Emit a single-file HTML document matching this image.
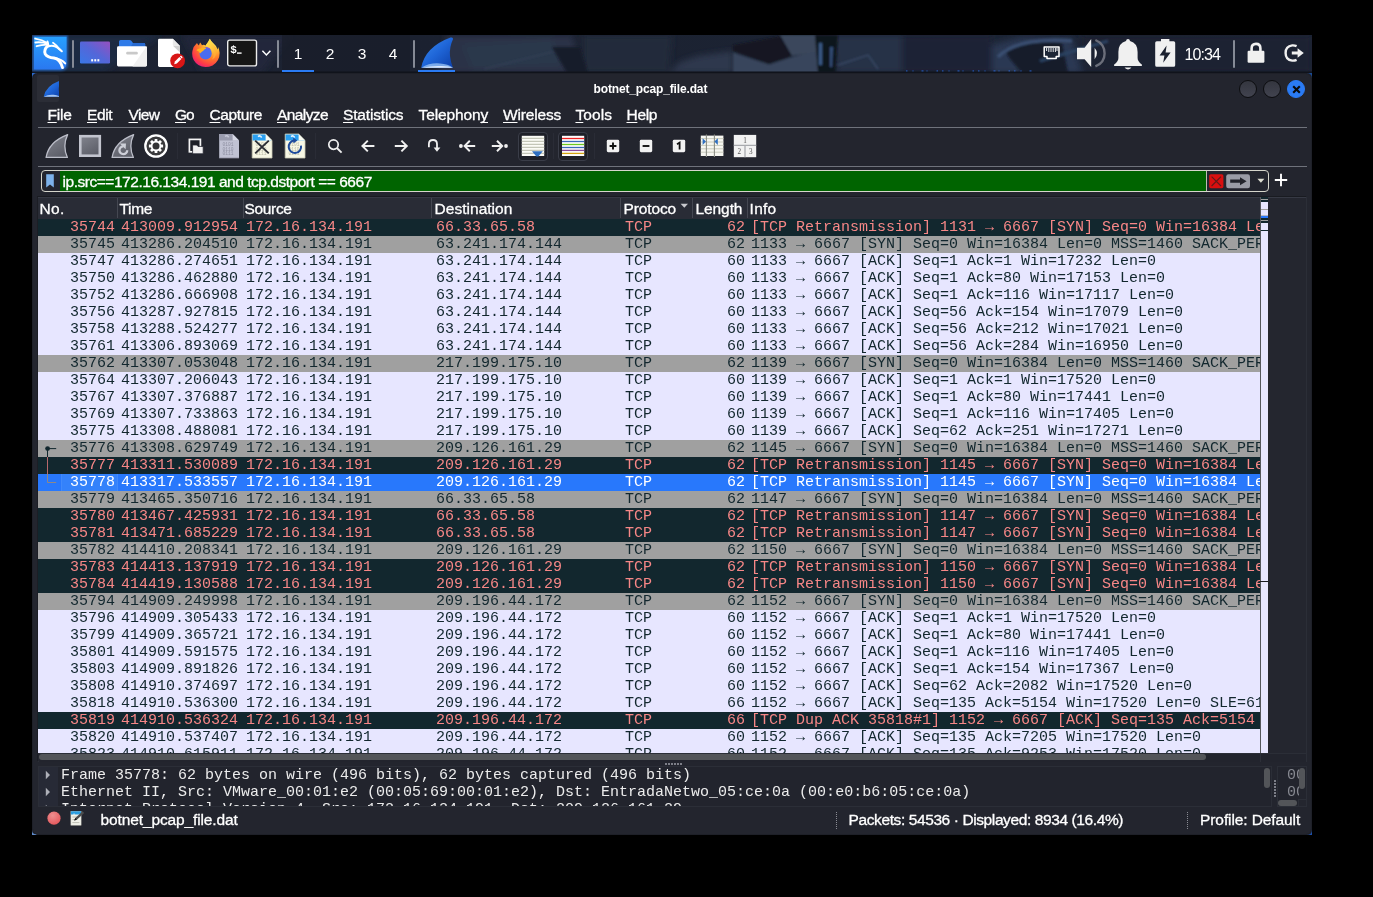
<!DOCTYPE html>
<html lang="en">
<head>
<meta charset="utf-8">
<title>botnet_pcap_file.dat</title>
<style>
html,body{margin:0;padding:0;background:#000;}
body{width:1373px;height:897px;position:relative;overflow:hidden;font-family:"Liberation Sans",sans-serif;color:#fff;}
#screen{position:absolute;left:32px;top:35px;width:1280px;height:800px;background:#23252e;overflow:hidden;}
#w{position:absolute;left:-32px;top:-35px;width:1373px;height:897px;will-change:transform;}
#w div,#w span,#w svg,#w i,#w b{position:absolute;}
.t{white-space:nowrap;line-height:1;}
/* panel */
#panel{left:32px;top:35px;width:1280px;height:38px;background:#1b2130;overflow:hidden;}
.psep{width:2px;top:5px;height:28px;background:#858a96;border-radius:1px;}
/* window */
#winb{left:32px;top:73px;width:1280px;height:762px;background:#1e2028;border-radius:6px 6px 5px 5px;}
#win{left:33px;top:74px;width:1278px;height:760px;background:#23252e;border-radius:5px;}
#title{left:594px;top:83px;font-size:12px;font-weight:bold;color:#fff;}
.wb{width:16px;height:16px;border-radius:50%;border:1px solid #0c0d10;background:linear-gradient(#34363f,#41434f);top:80px;box-sizing:content-box;}
#menu .t{top:106.5px;font-size:15.5px;color:#fff;-webkit-text-stroke:0.3px #fff;}
#menu u{text-decoration:underline;text-underline-offset:2px;text-decoration-thickness:1.1px;text-decoration-skip-ink:none;}
.hl{height:1px;background:#6f727b;left:38px;width:1269px;}
.tsep{width:1px;background:#2a2c36;top:133px;height:26px;}
/* filter */
#fbox{left:41px;top:170px;width:1228px;height:22px;box-sizing:border-box;border:1px solid #d6d6cc;border-radius:4px;background:#23252e;overflow:hidden;}
#fgreen{left:60px;top:171px;width:1146px;height:20px;background:#006400;}
#ftext{left:63px;top:173.5px;font-size:15.5px;color:#fff;-webkit-text-stroke:0.3px #fff;}
/* list */
#frame{left:37px;top:196px;width:1270px;height:566px;background:#24262f;box-sizing:border-box;border:1px solid #2b2e37;border-top-color:#191b21;border-left-color:#1c1e25;}
#hdr{left:38px;top:198px;width:1222px;height:21px;background:#292c36;font-size:15.5px;color:#fff;-webkit-text-stroke:0.3px #fff;}
#hdr .t{top:2.5px;}
#hdr i{top:0px;width:1px;height:20px;background:#454852;}
#list{left:38px;top:219px;width:1222px;height:534px;overflow:hidden;background:#e7e6ff;}
#list .r{position:relative;height:17px;width:1222px;white-space:nowrap;overflow:hidden;font-family:"Liberation Mono",monospace;font-size:15px;line-height:17px;}
#list .r .c{top:0px;height:17px;white-space:pre;}
.no{left:0;width:77px;text-align:right;}
.tm{left:83px;}
.sr{left:208px;}
.ds{left:398px;}
.pr{left:587px;}
.ln{left:654px;width:53px;text-align:right;}
.in{left:713px;}
.bad{background:#12272e;color:#f78787;}
.syn{background:#a0a0a0;color:#12272e;}
.tcp{background:#e7e6ff;color:#12272e;}
.sel{background:#2878fc;color:#fff;}
.cur{left:23px;width:55px;background:#3482fb;border-left:1px solid #418afb;border-right:1px solid #418afb;}
/* details */
.mono{font-family:"Liberation Mono",monospace;font-size:15px;line-height:17px;white-space:pre;}
.sb{background:#535559;border-radius:3px;}
#status .t{top:811.5px;font-size:15.5px;color:#fff;-webkit-text-stroke:0.3px #fff;}
#m1{left:47.50px !important;letter-spacing:-0.240px;}
#m2{left:87.02px !important;letter-spacing:-0.360px;}
#m3{left:128.50px !important;letter-spacing:-0.660px;}
#m4{left:175.04px !important;letter-spacing:-1.080px;}
#m5{left:209.50px !important;letter-spacing:-0.360px;}
#m6{left:277.00px !important;letter-spacing:-0.600px;}
#m7{left:343.02px !important;letter-spacing:-0.160px;}
#m8{left:418.54px !important;letter-spacing:-0.135px;}
#m9{left:503.00px !important;letter-spacing:-0.154px;}
#m10{left:575.46px !important;letter-spacing:0.090px;}
#m11{left:626.48px !important;letter-spacing:-0.300px;}
#title{left:593.58px !important;letter-spacing:-0.152px;}
#ftext{left:62.60px !important;letter-spacing:-0.472px;}
#h1{left:1.58px !important;letter-spacing:0.270px;}
#h2{left:81.52px !important;letter-spacing:-0.300px;}
#h3{left:206.62px !important;letter-spacing:-0.360px;}
#h4{left:396.60px !important;letter-spacing:0.018px;}
#h5{left:585.58px !important;letter-spacing:-0.150px;}
#h6{left:657.58px !important;letter-spacing:-0.108px;}
#h7{left:711.60px !important;letter-spacing:0.240px;}
#s1{left:100.62px !important;letter-spacing:-0.133px;}
#s2{left:848.56px !important;letter-spacing:-0.397px;}
#s3{left:1200.06px !important;letter-spacing:-0.096px;}
#clock{left:1184.58px !important;letter-spacing:-0.900px;}

</style>
</head>
<body>
<div id="screen"><div id="w">
<div id="panel">
<svg style="left:0;top:0" width="1280" height="38" viewBox="0 0 1280 38">
<defs>
<filter id="bl" x="-20%" y="-50%" width="140%" height="200%"><feGaussianBlur stdDeviation="3"/></filter>
<filter id="bl2" x="-20%" y="-50%" width="140%" height="200%"><feGaussianBlur stdDeviation="1.2"/></filter>
<linearGradient id="pbg" x1="0" x2="1" y1="0" y2="0"><stop offset="0" stop-color="#1d2434"/><stop offset="0.3" stop-color="#1b2130"/><stop offset="0.75" stop-color="#1c2434"/><stop offset="1" stop-color="#1a2236"/></linearGradient>
</defs>
<rect width="1280" height="38" fill="url(#pbg)"/>
<g filter="url(#bl)">
<polygon points="0,0 130,0 70,38 0,38" fill="#1f2a42"/>
<polygon points="150,0 260,0 230,38 170,38" fill="#20283a"/>
<polygon points="415,0 540,0 551,38 405,38" fill="#293346"/>
<polygon points="430,10 520,4 530,30 440,34" fill="#2c374b"/>
<polygon points="551,0 640,0 637,38 551,38" fill="#212a3b"/>
<polygon points="637,38 648,27 666,21 701,16 701,38" fill="#2e394d"/>
<polygon points="800,0 880,0 870,38 805,38" fill="#263047"/>
<polygon points="870,0 960,0 960,38 870,38" fill="#1a2234"/>
<polygon points="960,10 990,2 1040,3 1050,38 960,38" fill="#2b3952"/>
<polygon points="1050,0 1280,0 1280,38 1050,38" fill="#1b2132"/>
</g>
<g filter="url(#bl2)">
<polygon points="701,10 760,-1 760,21 737,29 701,16" fill="#141924"/>
<polygon points="701,17.4 737,29.6 760,22 790,14 790,38 701,38" fill="#38455c"/>
<polygon points="748,0 790,0 790,16 760,21" fill="#3a465c"/>
<polygon points="783,0 806,0 803,38 786,38" fill="#0f131c"/>
<polygon points="787,8 790,8 790,30 787,30" fill="#3b5a86"/>
<polygon points="798,12 801,12 800,32 798,32" fill="#34507a"/>
<polygon points="520,12 548,12 556,38 535,38" fill="#181d2a"/>
<path d="M452,34 L520,17" stroke="#36435a" stroke-width="1.2" fill="none"/>
<path d="M806,30 L836,20 L846,34" stroke="#3a4a66" stroke-width="1.4" fill="none"/>
<polygon points="972,14 1000,6 1030,8 1036,38 990,38 978,24" fill="#151b2a"/>
<path d="M966,22 Q985,2 1040,6" stroke="#3a4f72" stroke-width="3.5" fill="none"/>
<path d="M1008,26 L1076,6" stroke="#2b4262" stroke-width="3" fill="none"/>
</g>
<path d="M874,36.2 H1000" stroke="#2a6ae0" stroke-width="1.2" stroke-dasharray="1.5 5 1 8 2 3 1 9 1.5 4" fill="none"/>
<rect x="250" y="0" width="128" height="38" fill="#1a1e2a" opacity="0.75"/>
<rect x="0" y="36.5" width="1280" height="1.5" fill="#10131b"/>
</svg>
</div>
<!-- kali menu -->
<svg style="left:32px;top:35px" width="40" height="38" viewBox="0 0 40 38">
<defs><linearGradient id="kg" x1="0" y1="0" x2="0" y2="1"><stop offset="0" stop-color="#27a0ff"/><stop offset="1" stop-color="#2a78f0"/></linearGradient>
<filter id="kgl" x="-20%" y="-20%" width="140%" height="140%"><feGaussianBlur stdDeviation="1.1"/></filter></defs>
<path d="M0,0 H36 V29 Q36,36 28,36 H0 Z" fill="#2a80f5" opacity="0.55" filter="url(#kgl)"/>
<path d="M2,1.8 H34.6 V28 Q34.6,34.6 27,34.6 H2 Z" fill="url(#kg)"/>
<g fill="none" stroke="#fff" stroke-linecap="round" stroke-linejoin="round">
<path d="M3.2,3.6 Q10,4.5 15.8,8.2" stroke-width="1.9"/>
<path d="M3.4,7.5 Q10,6.8 15.8,8.8" stroke-width="1.9"/>
<path d="M4.6,11.2 Q10,9.4 16,9.6" stroke-width="1.9"/>
<path d="M15.5,6.5 Q16.5,9.5 16,11" stroke-width="2"/>
<path d="M16.2,10.4 Q11.5,14.5 13.2,19 Q15.5,22.6 22,23 Q28,24 30.5,32.6" stroke-width="2.9"/>
<path d="M23,23.2 Q30,24.5 33.2,28.4" stroke-width="1.9"/>
<path d="M15.8,11.4 Q21.5,9.6 25.6,12.6 Q28.5,15 29.8,16.2" stroke-width="2.1"/>
<path d="M21,7.8 Q24.5,10 27.4,14.2" stroke-width="1.8"/>
</g>
</svg>
<div class="psep" style="left:72px;top:40px"></div>
<!-- show desktop -->
<svg style="left:80px;top:41px" width="30" height="23" viewBox="0 0 30 23">
<defs><linearGradient id="sd" x1="0" y1="1" x2="1" y2="0"><stop offset="0" stop-color="#3878e8"/><stop offset="0.5" stop-color="#5566d8"/><stop offset="1" stop-color="#9650bf"/></linearGradient></defs>
<rect x="0" y="0.5" width="30" height="22" rx="1.2" fill="url(#sd)"/>
<rect x="11.2" y="18.2" width="1.9" height="2.2" fill="#fff"/><rect x="14.3" y="18.2" width="1.9" height="2.2" fill="#fff"/><rect x="17.4" y="18.2" width="1.9" height="2.2" fill="#fff"/>
</svg>
<!-- folder -->
<svg style="left:116px;top:39px" width="32" height="28" viewBox="0 0 32 28">
<path d="M3,2.6 Q3,1 4.6,1 H13.6 Q14.6,1 15.3,1.8 L17,4 H27.8 Q29.2,4 29.2,5.4 V9 H3 Z" fill="#2f7be8"/>
<path d="M17,4 H27.8 Q29.2,4 29.2,5.4 V9 H14 Z" fill="#2769cf"/>
<path d="M1,8.6 Q1,7.2 2.4,7.2 H29.6 Q31,7.2 31,8.6 V26 Q31,27.4 29.6,27.4 H2.4 Q1,27.4 1,26 Z" fill="#fff"/>
<path d="M31,8.6 V26 Q31,27.4 29.6,27.4 H16.5 L30.5,7.6 Q31,8 31,8.6 Z" fill="#f1f1f1"/>
<rect x="10.2" y="12.7" width="11.6" height="2.7" rx="1.2" fill="#c9c9c9"/>
</svg>
<!-- text editor -->
<svg style="left:157px;top:38px" width="30" height="32" viewBox="0 0 30 32">
<path d="M1,2.2 Q1,0.8 2.4,0.8 H15.8 L23,8 V27.6 Q23,29 21.6,29 H2.4 Q1,29 1,27.6 Z" fill="#fff"/>
<path d="M15.8,0.8 L23,8 H17 Q15.8,8 15.8,6.8 Z" fill="#e9e9e9"/>
<path d="M16.2,8 H23 V14.5 Z" fill="#d0d0d0"/>
<circle cx="20.6" cy="22.8" r="7.4" fill="#d81616"/>
<path d="M17.2,26.2 L17.9,23.6 L22.4,19.1 L24.3,21 L19.8,25.5 Z" fill="#fff"/>
<path d="M22.9,18.6 L23.5,18 Q24,17.6 24.5,18.1 L25.3,18.9 Q25.8,19.4 25.3,19.9 L24.8,20.5 Z" fill="#fff"/>
</svg>
<!-- firefox -->
<svg style="left:191px;top:38px" width="30" height="30" viewBox="0 0 30 30">
<defs>
<radialGradient id="ff1" cx="0.75" cy="0.15" r="1.0"><stop offset="0" stop-color="#fff36b"/><stop offset="0.3" stop-color="#ffbd35"/><stop offset="0.55" stop-color="#ff7a2a"/><stop offset="0.8" stop-color="#ff3b47"/><stop offset="1" stop-color="#e31587"/></radialGradient>
<linearGradient id="ff2" x1="0" y1="0" x2="1" y2="1"><stop offset="0" stop-color="#fff14f"/><stop offset="1" stop-color="#ff9a2e"/></linearGradient>
</defs>
<path d="M18.8,0.8 Q17.2,4.5 14.6,7.4 Q12.8,6.4 11,7.2 Q9.8,5.4 9.2,4.6 Q8.2,6 8,7.4 Q6.4,6.2 6,5 Q2.4,8 1.4,13 Q0,22 7.4,27 Q14,31 21.6,27.4 Q29,23 28.6,14.4 Q28.4,11 27,9 Q27,10.6 26.6,11.4 Q25.4,7.4 22.6,5.4 Q20,3.6 18.8,0.8 Z" fill="url(#ff1)"/>
<circle cx="14.6" cy="15.4" r="6.1" fill="#4a6cf0"/>
<path d="M14.6,9.3 Q18.5,9 20.6,12.4 Q18.6,10.6 16.4,11.2 Z" fill="#7a55e0"/>
<path d="M5.4,12.2 Q7,10.2 9.6,10.6 Q11.4,8.8 13.6,9.2 Q14.6,9.4 15.2,10.4 Q13.4,11 12.6,12.4 Q11,13.4 9,15.6 Q8.4,13 5.4,12.2 Z" fill="#ffb21f"/>
<path d="M18.8,0.8 Q21,5 24,8 Q27,12 25,17 Q24,20 21,21.6 Q24.6,16 21.2,11.4 Q18.8,8.6 14.6,7.4 Q17.2,4.5 18.8,0.8 Z" fill="url(#ff2)" opacity="0.9"/>
</svg>
<!-- terminal -->
<svg style="left:226px;top:38px" width="32" height="30" viewBox="0 0 32 30">
<rect x="1.7" y="2.1" width="28.8" height="25.8" rx="2" fill="#161616" stroke="#ededed" stroke-width="1.4"/>
<text x="4.3" y="15.2" font-family="Liberation Mono, monospace" font-weight="bold" font-size="11" fill="#fff">$</text>
<rect x="11" y="14.4" width="4.6" height="1.4" fill="#fff"/>
</svg>
<svg style="left:261px;top:49px" width="11" height="9" viewBox="0 0 11 9"><path d="M1.4,1.8 L5.4,6 L9.4,1.8" fill="none" stroke="#fff" stroke-width="1.5"/></svg>
<div class="psep" style="left:277px;top:40px"></div>
<!-- workspaces -->
<div style="left:282px;top:70px;width:32px;height:2px;background:#2a7bf4"></div>
<span class="t ws" style="left:282px;top:45.6px;width:32px;text-align:center;font-size:15.5px">1</span>
<span class="t ws" style="left:314px;top:45.6px;width:32px;text-align:center;font-size:15.5px">2</span>
<span class="t ws" style="left:346px;top:45.6px;width:32px;text-align:center;font-size:15.5px">3</span>
<span class="t ws" style="left:377px;top:45.6px;width:32px;text-align:center;font-size:15.5px">4</span>
<div class="psep" style="left:413px;top:40px"></div>
<!-- wireshark task -->
<svg style="left:418px;top:36px" width="38" height="36" viewBox="0 0 38 36">
<defs><linearGradient id="wf" x1="0" y1="0" x2="1" y2="1"><stop offset="0" stop-color="#3b8cf0"/><stop offset="0.5" stop-color="#1f66d8"/><stop offset="1" stop-color="#0d3fa8"/></linearGradient></defs>
<path d="M3.2,31.8 Q7,11 32.5,1.6 Q35.4,0.9 35,3.2 Q31.2,11 32,20 Q32.6,26 35,31.8 Z" fill="url(#wf)"/>
<path d="M3.2,31.8 Q12,26.5 22,27.5 Q30,28 35,31.8 Z" fill="#8db8ee" opacity="0.85"/>
<path d="M4,31.8 Q14,29.4 24,30 Q31,30.3 35,31.8 Z" fill="#dbe8fa"/>
<rect x="0" y="34" width="37" height="2" fill="#2a7bf4"/>
</svg>
<!-- tray -->
<svg style="left:1042px;top:45px" width="20" height="16" viewBox="0 0 20 16">
<path d="M2.2,2 H17 V11.4 H14.2 V13.6 H5 V11.4 H2.2 Z" fill="#1c2536" stroke="#fff" stroke-width="1.5" stroke-linejoin="round"/>
<path d="M4.6,3 V6 M6.8,3 V7 M9,3 V7 M11.2,3 V7 M13.4,3 V7 M15,3 V6" stroke="#fff" stroke-width="0.9"/>
</svg>
<svg style="left:1075px;top:37px" width="34" height="32" viewBox="0 0 34 32">
<path d="M2,10.7 H9.6 L16.2,2 V29.9 L9.6,22.2 H2 Z" fill="#f0f0f0"/>
<path d="M19.6,10.7 Q24.4,16.4 19.6,22.2 Z" fill="#f0f0f0"/>
<path d="M20.4,3 Q29.6,7 29.6,16.4 Q29.6,25.6 20.4,29.4" fill="none" stroke="#6b6e7a" stroke-width="2.4"/>
</svg>
<svg style="left:1112px;top:37px" width="32" height="34" viewBox="0 0 32 34">
<path d="M16,2 Q17.8,2 18,4 Q25.6,6 25.6,15 V21 Q25.6,24.4 29.8,27.6 Q30.4,28.4 29.6,29 H2.4 Q1.6,28.4 2.2,27.6 Q6.4,24.4 6.4,21 V15 Q6.4,6 14,4 Q14.2,2 16,2 Z" fill="#f0f0f0"/>
<path d="M12.6,30.6 H19.4 Q18.6,32.4 16,32.4 Q13.4,32.4 12.6,30.6 Z" fill="#f0f0f0"/>
</svg>
<svg style="left:1154px;top:38px" width="22" height="30" viewBox="0 0 22 30">
<path d="M7,1 H15.4 V3.2 H19.6 Q21.2,3.2 21.2,4.8 V27.2 Q21.2,28.8 19.6,28.8 H2.8 Q1.2,28.8 1.2,27.2 V4.8 Q1.2,3.2 2.8,3.2 H7 Z" fill="#f0f0f0"/>
<path d="M12.6,7.6 L5.6,17.4 H10.4 L9.2,24.8 L16.6,14.4 H11.6 Z" fill="#1b2130"/>
</svg>
<span class="t" id="clock" style="left:1185px;top:46.8px;font-size:16px">10:34</span>
<div class="psep" style="left:1233px;top:40px"></div>
<svg style="left:1246px;top:41px" width="20" height="23" viewBox="0 0 20 23">
<path d="M5.6,10.4 V7.4 Q5.6,2.9 10,2.9 Q14.4,2.9 14.4,7.4 V10.4" fill="none" stroke="#f0f0f0" stroke-width="2.6"/>
<rect x="1.6" y="9.8" width="16.8" height="12" rx="1.2" fill="#f0f0f0"/>
</svg>
<svg style="left:1283px;top:43px" width="22" height="20" viewBox="0 0 22 20">
<path d="M13.6,3.2 Q11.4,2.2 9.2,2.4 Q2.6,3.2 2.6,10 Q2.6,16.8 9.2,17.6 Q11.4,17.8 13.6,16.8" fill="none" stroke="#f0f0f0" stroke-width="2.4"/>
<path d="M8.8,8.6 H14.6 V5.2 L20.8,10 L14.6,14.8 V11.4 H8.8 Z" fill="#f0f0f0"/>
</svg>

<div id="winb"></div><div id="win"></div>
<div style="left:37px;top:75px;width:22px;height:27px;background:#2b2d36;border-radius:2px;overflow:hidden">
<svg style="left:5px;top:5px" width="20" height="19" viewBox="0 0 38 36">
<path d="M3.2,31.8 Q7,11 32.5,1.6 Q35.4,0.9 35,3.2 Q31.2,11 32,20 Q32.6,26 35,31.8 Z" fill="url(#wf)"/>
<path d="M3.2,31.8 Q12,27 22,28 Q30,28.5 35,31.8 Z" fill="#a8c8f2"/>
</svg></div>
<span class="t" id="title">botnet_pcap_file.dat</span>
<div class="wb" style="left:1239px"></div>
<div class="wb" style="left:1263px"></div>
<div class="wb" style="left:1287px;background:#2a7bf4;border-color:#2a7bf4"></div>
<svg style="left:1287.5px;top:80.5px" width="17" height="17" viewBox="0 0 17 17"><path d="M5.2,5.2 L11.8,11.8 M11.8,5.2 L5.2,11.8" stroke="#0a0a0a" stroke-width="2.1" stroke-linecap="butt"/></svg>

<div id="menu">
<span class="t" id="m1" style="left:47.5px"><u>F</u>ile</span>
<span class="t" id="m2" style="left:87.2px"><u>E</u>dit</span>
<span class="t" id="m3" style="left:128px"><u>V</u>iew</span>
<span class="t" id="m4" style="left:175.4px"><u>G</u>o</span>
<span class="t" id="m5" style="left:209.5px"><u>C</u>apture</span>
<span class="t" id="m6" style="left:277px"><u>A</u>nalyze</span>
<span class="t" id="m7" style="left:343.2px"><u>S</u>tatistics</span>
<span class="t" id="m8" style="left:418.9px">Telephon<u>y</u></span>
<span class="t" id="m9" style="left:503px"><u>W</u>ireless</span>
<span class="t" id="m10" style="left:575.1px"><u>T</u>ools</span>
<span class="t" id="m11" style="left:626.3px"><u>H</u>elp</span>
</div>
<div class="hl" style="top:127px"></div>
<div class="hl" style="top:166px"></div>

<svg style="left:0;top:0" width="0" height="0"><defs>
<linearGradient id="gf" x1="0" y1="0" x2="0.6" y2="1"><stop offset="0" stop-color="#82848e"/><stop offset="1" stop-color="#5d5f69"/></linearGradient>
</defs></svg>
<!-- start capture fin -->
<svg style="left:45px;top:133px" width="25" height="26" viewBox="0 0 25 26">
<path d="M1.1,24.4 Q3.6,8.8 22.6,1.6 Q17.2,13 22.4,24.4 Z" fill="url(#gf)" stroke="#bcbec9" stroke-width="1.3" stroke-linejoin="round"/>
</svg>
<!-- stop -->
<svg style="left:78px;top:134px" width="24" height="24" viewBox="0 0 24 24">
<rect x="2.3" y="2.2" width="19.5" height="19.5" fill="url(#gf)" stroke="#c2c4ce" stroke-width="2.6"/>
</svg>
<!-- restart fin -->
<svg style="left:111px;top:133px" width="25" height="26" viewBox="0 0 25 26">
<path d="M1.1,24.4 Q3.6,8.8 22.6,1.6 Q17.2,13 22.4,24.4 Z" fill="url(#gf)" stroke="#bcbec9" stroke-width="1.3" stroke-linejoin="round"/>
<path d="M12.4,13.4 A3.9,3.9 0 1 0 16.2,17.2" fill="none" stroke="#cdcfd8" stroke-width="2.3"/>
<path d="M8.8,10.6 L15,10.4 L14.6,16.2 Z" fill="#cdcfd8"/>
</svg>
<!-- options gear -->
<svg style="left:143px;top:133px" width="26" height="26" viewBox="0 0 26 26">
<circle cx="13" cy="13" r="10.7" fill="#3a3a3c" stroke="#fff" stroke-width="2.3"/>
<g fill="#fff"><circle cx="13" cy="13" r="5.3"/>
<rect x="11.6" y="5.9" width="2.8" height="14.2" rx="0.5"/>
<rect x="11.6" y="5.9" width="2.8" height="14.2" rx="0.5" transform="rotate(45 13 13)"/>
<rect x="11.6" y="5.9" width="2.8" height="14.2" rx="0.5" transform="rotate(90 13 13)"/>
<rect x="11.6" y="5.9" width="2.8" height="14.2" rx="0.5" transform="rotate(135 13 13)"/></g>
<circle cx="13" cy="13" r="3.5" fill="#333335"/>
</svg>
<div class="tsep" style="left:177px"></div>
<!-- open -->
<svg style="left:187px;top:137px" width="18" height="18" viewBox="0 0 18 18">
<rect x="2.4" y="2.4" width="11" height="12.4" fill="#1d1f27" stroke="#f4f4f4" stroke-width="1.7"/>
<path d="M5.6,8 H9.8 L11,9.4 H16.2 V16.8 H5.6 Z" fill="#f0f0f0" stroke="#23252e" stroke-width="0.8"/>
</svg>
<!-- save (disabled) -->
<svg style="left:218px;top:133px" width="22" height="26" viewBox="0 0 22 26">
<path d="M1.2,1 H14.6 L21,7.4 V25 H1.2 Z" fill="#c0c2d3"/>
<path d="M1.2,1 H14.6 L21,7.4 H1.2 Z" fill="#9a9cae"/>
<path d="M14.6,1 L21,7.4 H14.6 Z" fill="#d6d8e4"/>
<path d="M7,3.4 Q9.4,1.8 10.6,4.4" stroke="#c8cad8" stroke-width="1.6" fill="none"/>
<g font-family="Liberation Mono, monospace" font-size="4.6" fill="#8e90a2"><text x="4.4" y="13">0101</text><text x="4.4" y="17.6">0110</text><text x="4.4" y="22.2">0111</text></g>
<path d="M1.2,25 H21" stroke="#8a8c9c" stroke-width="0.8"/>
</svg>
<!-- close file -->
<svg style="left:251px;top:133px" width="22" height="26" viewBox="0 0 22 26">
<path d="M1.2,1 H14.6 L21,7.4 V25 H1.2 Z" fill="#f7f7e4" stroke="#c9c9b4" stroke-width="0.8"/>
<path d="M1.6,1.4 H14.4 L20.6,7.4 H1.6 Z" fill="#2a9ff0"/>
<path d="M14.6,1 L21,7.4 H14.6 Z" fill="#fbfbf0"/>
<path d="M7,3.6 Q9.4,1.8 10.6,4.6" stroke="#e8f4ff" stroke-width="1.6" fill="none"/>
<g font-family="Liberation Mono, monospace" font-size="4.6" fill="#b9b9a6"><text x="4.4" y="13">0101</text><text x="4.4" y="17.6">0110</text><text x="4.4" y="22.2">0111</text></g>
<path d="M4.2,7.6 L17.8,20.4 M17.8,7.6 L4.2,20.4" stroke="#2b2d33" stroke-width="1.9"/>
</svg>
<!-- reload -->
<svg style="left:284px;top:133px" width="22" height="26" viewBox="0 0 22 26">
<path d="M1.2,1 H14.6 L21,7.4 V25 H1.2 Z" fill="#f7f7e4" stroke="#c9c9b4" stroke-width="0.8"/>
<path d="M1.6,1.4 H14.4 L20.6,7.4 H1.6 Z" fill="#2a9ff0"/>
<path d="M14.6,1 L21,7.4 H14.6 Z" fill="#fbfbf0"/>
<path d="M7,3.6 Q9.4,1.8 10.6,4.6" stroke="#e8f4ff" stroke-width="1.6" fill="none"/>
<g font-family="Liberation Mono, monospace" font-size="4.6" fill="#b9b9a6"><text x="4.4" y="13">0101</text><text x="4.4" y="17.6">0110</text><text x="4.4" y="22.2">0111</text></g>
<path d="M10.2,7.6 A6.2,6.2 0 1 0 17,12.6" fill="none" stroke="#1d4a9c" stroke-width="2"/>
<path d="M9.2,4.6 L13.4,7.4 L9.4,10.4 Z" fill="#1d4a9c"/>
</svg>
<div class="tsep" style="left:315px"></div>
<!-- find -->
<svg style="left:326px;top:137px" width="18" height="18" viewBox="0 0 18 18">
<circle cx="7.5" cy="7.6" r="4.7" fill="none" stroke="#f0f0f0" stroke-width="1.7"/>
<path d="M10.9,11 L15.6,15.6" stroke="#f0f0f0" stroke-width="1.9"/>
</svg>
<!-- back -->
<svg style="left:360px;top:138px" width="16" height="16" viewBox="0 0 16 16"><path d="M14.4,8 H3 M7.8,2.6 L2.4,8 L7.8,13.4" fill="none" stroke="#f0f0f0" stroke-width="1.95"/></svg>
<!-- forward -->
<svg style="left:393px;top:138px" width="16" height="16" viewBox="0 0 16 16"><path d="M1.8,8 H13.2 M8.4,2.6 L13.8,8 L8.4,13.4" fill="none" stroke="#f0f0f0" stroke-width="1.95"/></svg>
<!-- goto -->
<svg style="left:426px;top:137px" width="16" height="18" viewBox="0 0 16 18">
<path d="M2.9,10.2 V7 Q2.9,3 7,3 Q11,3 11,7 V11" fill="none" stroke="#f0f0f0" stroke-width="1.8"/>
<path d="M7.6,10.4 H14.4 L11,14.8 Z" fill="#f0f0f0"/>
</svg>
<!-- first -->
<svg style="left:457px;top:138px" width="20" height="16" viewBox="0 0 20 16"><circle cx="3.9" cy="8" r="1.9" fill="#f0f0f0"/><path d="M18.2,8 H8.4 M12.8,2.8 L7.6,8 L12.8,13.2" fill="none" stroke="#f0f0f0" stroke-width="1.95"/></svg>
<!-- last -->
<svg style="left:490px;top:138px" width="20" height="16" viewBox="0 0 20 16"><circle cx="16" cy="8" r="1.9" fill="#f0f0f0"/><path d="M1.8,8 H11.4 M7,2.8 L12.2,8 L7,13.2" fill="none" stroke="#f0f0f0" stroke-width="1.95"/></svg>
<!-- autoscroll (checked) -->
<div style="left:518px;top:132px;width:30px;height:29px;box-sizing:border-box;border:1px solid #3a3d48;border-radius:4px;background:#1e2028"></div>
<svg style="left:521px;top:135px" width="24" height="22" viewBox="0 0 24 22">
<rect x="0.8" y="0.8" width="22.4" height="20.2" fill="#fbfbf6"/>
<g stroke="#c4c6b8" stroke-width="1.1"><path d="M0.8,3.4 H23.2 M0.8,6.4 H23.2 M0.8,9.4 H23.2 M0.8,12.4 H23.2 M0.8,15.4 H23.2 M0.8,18.4 H23.2"/></g>
<path d="M11,16.2 H21.8 L17.4,21.6 H15.4 Z" fill="#2f6fc0"/>
</svg>
<div class="tsep" style="left:553px"></div>
<!-- colorize (checked) -->
<div style="left:558px;top:132px;width:30px;height:29px;box-sizing:border-box;border:1px solid #3a3d48;border-radius:4px;background:#1e2028"></div>
<svg style="left:561px;top:135px" width="24" height="22" viewBox="0 0 24 22">
<rect x="1" y="0.8" width="22.2" height="20.2" fill="#fdfdfd"/>
<path d="M1,3.5 H23.2" stroke="#ee2222" stroke-width="1.3"/>
<path d="M1,6.5 H23.2" stroke="#3a68b8" stroke-width="1.3"/>
<path d="M1,9.5 H23.2" stroke="#6cc820" stroke-width="1.3"/>
<path d="M1,12.5 H23.2" stroke="#3a68b8" stroke-width="1.3"/>
<path d="M1,15.4 H23.2" stroke="#8a4a9c" stroke-width="1.3"/>
<path d="M1,18.4 H23.2" stroke="#d4a412" stroke-width="1.3"/>
</svg>
<div class="tsep" style="left:594px"></div>
<!-- zoom in/out/100 -->
<svg style="left:606px;top:139px" width="14" height="14" viewBox="0 0 14 14"><rect x="0.8" y="0.8" width="12.4" height="12.4" rx="1.4" fill="#f2f2f2"/><path d="M3.6,7 H10.4 M7,3.6 V10.4" stroke="#111" stroke-width="1.9"/></svg>
<svg style="left:639px;top:139px" width="14" height="14" viewBox="0 0 14 14"><rect x="0.8" y="0.8" width="12.4" height="12.4" rx="1.4" fill="#f2f2f2"/><path d="M3.6,7 H10.4" stroke="#111" stroke-width="1.9"/></svg>
<svg style="left:672px;top:139px" width="14" height="14" viewBox="0 0 14 14"><rect x="0.8" y="0.8" width="12.4" height="12.4" rx="1.4" fill="#f2f2f2"/><path d="M5,5.2 L7.6,3.6 V10.6" fill="none" stroke="#111" stroke-width="1.8"/></svg>
<!-- resize columns -->
<svg style="left:700px;top:134px" width="24" height="24" viewBox="0 0 24 24">
<rect x="0.8" y="1.6" width="22.6" height="20.4" fill="#f6f6f0"/>
<g stroke="#c8cabc" stroke-width="1"><path d="M0.8,4.6 H23.4 M0.8,8 H23.4 M0.8,11.4 H23.4 M0.8,14.8 H23.4 M0.8,18.2 H23.4"/></g>
<path d="M6.4,0.6 V23 M14.4,0.6 V23" stroke="#8c8e86" stroke-width="1.1"/>
<path d="M2.6,4.2 L6,7.6 L2.6,11 Z" fill="#2f6fc0"/>
<path d="M17.8,4.2 L14.4,7.6 L17.8,11 Z" fill="#2f6fc0"/>
</svg>
<!-- layout -->
<svg style="left:733px;top:134px" width="24" height="24" viewBox="0 0 24 24">
<rect x="0.8" y="0.9" width="22.4" height="22.3" fill="#f2f2f2"/>
<path d="M0.8,11.4 H23.2 M12,11.4 V23.2" stroke="#a8aaae" stroke-width="1.3"/>
<g font-family="Liberation Serif, serif" font-size="7.2" fill="#555"><text x="10.2" y="8.6">1</text><text x="4.6" y="20.4">2</text><text x="16" y="20.4">3</text></g>
</svg>

<div id="fbox"></div>
<div id="fgreen"></div>
<div style="left:1206px;top:171px;width:1px;height:20px;background:#bdbdb4"></div>
<svg style="left:45px;top:173px" width="10" height="16" viewBox="0 0 10 16"><path d="M1.2,1.2 H8.8 V14.6 L5,11.4 L1.2,14.6 Z" fill="#7db2ea"/></svg>
<span class="t" id="ftext">ip.src==172.16.134.191 and tcp.dstport == 6667</span>
<svg style="left:1209px;top:174px" width="15" height="15" viewBox="0 0 15 15"><rect x="0.2" y="0.2" width="14.2" height="14" rx="1.6" fill="#d90f0f"/><path d="M2.6,2.6 L12,12 M12,2.6 L2.6,12" stroke="#5e1a1a" stroke-width="1.1"/></svg>
<svg style="left:1226px;top:174px" width="25" height="15" viewBox="0 0 25 15"><rect x="0.2" y="0.2" width="23.8" height="14" rx="2.2" fill="#9a9ca6"/><path d="M4.2,5.6 H14 V3.2 L20.6,7.2 L14,11.2 V8.8 H4.2 Z" fill="#22242c"/></svg>
<svg style="left:1257px;top:178px" width="8" height="6" viewBox="0 0 8 6"><path d="M0.4,0.8 H7.4 L3.9,4.8 Z" fill="#deded2"/></svg>
<svg style="left:1274px;top:173px" width="14" height="14" viewBox="0 0 14 14"><path d="M0.8,7 H13.2 M7,0.8 V13.2" stroke="#fff" stroke-width="1.9"/></svg>

<div id="frame"></div>
<div style="left:38px;top:197px;width:1268px;height:1px;background:#363944"></div>
<div id="hdr">
<span class="t" id="h1" style="left:2.3px">No.</span><i style="left:79px"></i>
<span class="t" id="h2" style="left:81.7px">Time</span><i style="left:205px"></i>
<span class="t" id="h3" style="left:207.7px">Source</span><i style="left:393px"></i>
<span class="t" id="h4" style="left:397.5px">Destination</span><i style="left:582px"></i>
<span class="t" id="h5" style="left:586.3px">Protoco</span><i style="left:654px"></i>
<span class="t" id="h6" style="left:658.3px">Length</span><i style="left:709px"></i>
<span class="t" id="h7" style="left:712.5px">Info</span>
<svg style="left:642px;top:5px" width="9" height="6" viewBox="0 0 9 6"><path d="M0.6,0.8 H8 L4.3,4.8 Z" fill="#c8c9ce"/></svg>
</div>
<div id="list">
<div class="r bad"><span class="c no">35744</span><span class="c tm">413009.912954</span><span class="c sr">172.16.134.191</span><span class="c ds">66.33.65.58</span><span class="c pr">TCP</span><span class="c ln">62</span><span class="c in">[TCP Retransmission] 1131 → 6667 [SYN] Seq=0 Win=16384 Len=0 MSS=1460 SACK_PERM</span></div>
<div class="r syn"><span class="c no">35745</span><span class="c tm">413286.204510</span><span class="c sr">172.16.134.191</span><span class="c ds">63.241.174.144</span><span class="c pr">TCP</span><span class="c ln">62</span><span class="c in">1133 → 6667 [SYN] Seq=0 Win=16384 Len=0 MSS=1460 SACK_PERM</span></div>
<div class="r tcp"><span class="c no">35747</span><span class="c tm">413286.274651</span><span class="c sr">172.16.134.191</span><span class="c ds">63.241.174.144</span><span class="c pr">TCP</span><span class="c ln">60</span><span class="c in">1133 → 6667 [ACK] Seq=1 Ack=1 Win=17232 Len=0</span></div>
<div class="r tcp"><span class="c no">35750</span><span class="c tm">413286.462880</span><span class="c sr">172.16.134.191</span><span class="c ds">63.241.174.144</span><span class="c pr">TCP</span><span class="c ln">60</span><span class="c in">1133 → 6667 [ACK] Seq=1 Ack=80 Win=17153 Len=0</span></div>
<div class="r tcp"><span class="c no">35752</span><span class="c tm">413286.666908</span><span class="c sr">172.16.134.191</span><span class="c ds">63.241.174.144</span><span class="c pr">TCP</span><span class="c ln">60</span><span class="c in">1133 → 6667 [ACK] Seq=1 Ack=116 Win=17117 Len=0</span></div>
<div class="r tcp"><span class="c no">35756</span><span class="c tm">413287.927815</span><span class="c sr">172.16.134.191</span><span class="c ds">63.241.174.144</span><span class="c pr">TCP</span><span class="c ln">60</span><span class="c in">1133 → 6667 [ACK] Seq=56 Ack=154 Win=17079 Len=0</span></div>
<div class="r tcp"><span class="c no">35758</span><span class="c tm">413288.524277</span><span class="c sr">172.16.134.191</span><span class="c ds">63.241.174.144</span><span class="c pr">TCP</span><span class="c ln">60</span><span class="c in">1133 → 6667 [ACK] Seq=56 Ack=212 Win=17021 Len=0</span></div>
<div class="r tcp"><span class="c no">35761</span><span class="c tm">413306.893069</span><span class="c sr">172.16.134.191</span><span class="c ds">63.241.174.144</span><span class="c pr">TCP</span><span class="c ln">60</span><span class="c in">1133 → 6667 [ACK] Seq=56 Ack=284 Win=16950 Len=0</span></div>
<div class="r syn"><span class="c no">35762</span><span class="c tm">413307.053048</span><span class="c sr">172.16.134.191</span><span class="c ds">217.199.175.10</span><span class="c pr">TCP</span><span class="c ln">62</span><span class="c in">1139 → 6667 [SYN] Seq=0 Win=16384 Len=0 MSS=1460 SACK_PERM</span></div>
<div class="r tcp"><span class="c no">35764</span><span class="c tm">413307.206043</span><span class="c sr">172.16.134.191</span><span class="c ds">217.199.175.10</span><span class="c pr">TCP</span><span class="c ln">60</span><span class="c in">1139 → 6667 [ACK] Seq=1 Ack=1 Win=17520 Len=0</span></div>
<div class="r tcp"><span class="c no">35767</span><span class="c tm">413307.376887</span><span class="c sr">172.16.134.191</span><span class="c ds">217.199.175.10</span><span class="c pr">TCP</span><span class="c ln">60</span><span class="c in">1139 → 6667 [ACK] Seq=1 Ack=80 Win=17441 Len=0</span></div>
<div class="r tcp"><span class="c no">35769</span><span class="c tm">413307.733863</span><span class="c sr">172.16.134.191</span><span class="c ds">217.199.175.10</span><span class="c pr">TCP</span><span class="c ln">60</span><span class="c in">1139 → 6667 [ACK] Seq=1 Ack=116 Win=17405 Len=0</span></div>
<div class="r tcp"><span class="c no">35775</span><span class="c tm">413308.488081</span><span class="c sr">172.16.134.191</span><span class="c ds">217.199.175.10</span><span class="c pr">TCP</span><span class="c ln">60</span><span class="c in">1139 → 6667 [ACK] Seq=62 Ack=251 Win=17271 Len=0</span></div>
<div class="r syn"><span class="c no">35776</span><span class="c tm">413308.629749</span><span class="c sr">172.16.134.191</span><span class="c ds">209.126.161.29</span><span class="c pr">TCP</span><span class="c ln">62</span><span class="c in">1145 → 6667 [SYN] Seq=0 Win=16384 Len=0 MSS=1460 SACK_PERM</span></div>
<div class="r bad"><span class="c no">35777</span><span class="c tm">413311.530089</span><span class="c sr">172.16.134.191</span><span class="c ds">209.126.161.29</span><span class="c pr">TCP</span><span class="c ln">62</span><span class="c in">[TCP Retransmission] 1145 → 6667 [SYN] Seq=0 Win=16384 Len=0 MSS=1460 SACK_PERM</span></div>
<div class="r sel"><span class="c cur"></span><span class="c no">35778</span><span class="c tm">413317.533557</span><span class="c sr">172.16.134.191</span><span class="c ds">209.126.161.29</span><span class="c pr">TCP</span><span class="c ln">62</span><span class="c in">[TCP Retransmission] 1145 → 6667 [SYN] Seq=0 Win=16384 Len=0 MSS=1460 SACK_PERM</span></div>
<div class="r syn"><span class="c no">35779</span><span class="c tm">413465.350716</span><span class="c sr">172.16.134.191</span><span class="c ds">66.33.65.58</span><span class="c pr">TCP</span><span class="c ln">62</span><span class="c in">1147 → 6667 [SYN] Seq=0 Win=16384 Len=0 MSS=1460 SACK_PERM</span></div>
<div class="r bad"><span class="c no">35780</span><span class="c tm">413467.425931</span><span class="c sr">172.16.134.191</span><span class="c ds">66.33.65.58</span><span class="c pr">TCP</span><span class="c ln">62</span><span class="c in">[TCP Retransmission] 1147 → 6667 [SYN] Seq=0 Win=16384 Len=0 MSS=1460 SACK_PERM</span></div>
<div class="r bad"><span class="c no">35781</span><span class="c tm">413471.685229</span><span class="c sr">172.16.134.191</span><span class="c ds">66.33.65.58</span><span class="c pr">TCP</span><span class="c ln">62</span><span class="c in">[TCP Retransmission] 1147 → 6667 [SYN] Seq=0 Win=16384 Len=0 MSS=1460 SACK_PERM</span></div>
<div class="r syn"><span class="c no">35782</span><span class="c tm">414410.208341</span><span class="c sr">172.16.134.191</span><span class="c ds">209.126.161.29</span><span class="c pr">TCP</span><span class="c ln">62</span><span class="c in">1150 → 6667 [SYN] Seq=0 Win=16384 Len=0 MSS=1460 SACK_PERM</span></div>
<div class="r bad"><span class="c no">35783</span><span class="c tm">414413.137919</span><span class="c sr">172.16.134.191</span><span class="c ds">209.126.161.29</span><span class="c pr">TCP</span><span class="c ln">62</span><span class="c in">[TCP Retransmission] 1150 → 6667 [SYN] Seq=0 Win=16384 Len=0 MSS=1460 SACK_PERM</span></div>
<div class="r bad"><span class="c no">35784</span><span class="c tm">414419.130588</span><span class="c sr">172.16.134.191</span><span class="c ds">209.126.161.29</span><span class="c pr">TCP</span><span class="c ln">62</span><span class="c in">[TCP Retransmission] 1150 → 6667 [SYN] Seq=0 Win=16384 Len=0 MSS=1460 SACK_PERM</span></div>
<div class="r syn"><span class="c no">35794</span><span class="c tm">414909.249998</span><span class="c sr">172.16.134.191</span><span class="c ds">209.196.44.172</span><span class="c pr">TCP</span><span class="c ln">62</span><span class="c in">1152 → 6667 [SYN] Seq=0 Win=16384 Len=0 MSS=1460 SACK_PERM</span></div>
<div class="r tcp"><span class="c no">35796</span><span class="c tm">414909.305433</span><span class="c sr">172.16.134.191</span><span class="c ds">209.196.44.172</span><span class="c pr">TCP</span><span class="c ln">60</span><span class="c in">1152 → 6667 [ACK] Seq=1 Ack=1 Win=17520 Len=0</span></div>
<div class="r tcp"><span class="c no">35799</span><span class="c tm">414909.365721</span><span class="c sr">172.16.134.191</span><span class="c ds">209.196.44.172</span><span class="c pr">TCP</span><span class="c ln">60</span><span class="c in">1152 → 6667 [ACK] Seq=1 Ack=80 Win=17441 Len=0</span></div>
<div class="r tcp"><span class="c no">35801</span><span class="c tm">414909.591575</span><span class="c sr">172.16.134.191</span><span class="c ds">209.196.44.172</span><span class="c pr">TCP</span><span class="c ln">60</span><span class="c in">1152 → 6667 [ACK] Seq=1 Ack=116 Win=17405 Len=0</span></div>
<div class="r tcp"><span class="c no">35803</span><span class="c tm">414909.891826</span><span class="c sr">172.16.134.191</span><span class="c ds">209.196.44.172</span><span class="c pr">TCP</span><span class="c ln">60</span><span class="c in">1152 → 6667 [ACK] Seq=1 Ack=154 Win=17367 Len=0</span></div>
<div class="r tcp"><span class="c no">35808</span><span class="c tm">414910.374697</span><span class="c sr">172.16.134.191</span><span class="c ds">209.196.44.172</span><span class="c pr">TCP</span><span class="c ln">60</span><span class="c in">1152 → 6667 [ACK] Seq=62 Ack=2082 Win=17520 Len=0</span></div>
<div class="r tcp"><span class="c no">35818</span><span class="c tm">414910.536300</span><span class="c sr">172.16.134.191</span><span class="c ds">209.196.44.172</span><span class="c pr">TCP</span><span class="c ln">66</span><span class="c in">1152 → 6667 [ACK] Seq=135 Ack=5154 Win=17520 Len=0 SLE=6178 SRE=7205</span></div>
<div class="r bad"><span class="c no">35819</span><span class="c tm">414910.536324</span><span class="c sr">172.16.134.191</span><span class="c ds">209.196.44.172</span><span class="c pr">TCP</span><span class="c ln">66</span><span class="c in">[TCP Dup ACK 35818#1] 1152 → 6667 [ACK] Seq=135 Ack=5154 Win=17520 Len=0 SLE=6178 SRE=7205</span></div>
<div class="r tcp"><span class="c no">35820</span><span class="c tm">414910.537407</span><span class="c sr">172.16.134.191</span><span class="c ds">209.196.44.172</span><span class="c pr">TCP</span><span class="c ln">60</span><span class="c in">1152 → 6667 [ACK] Seq=135 Ack=7205 Win=17520 Len=0</span></div>
<div class="r tcp"><span class="c no">35823</span><span class="c tm">414910.615911</span><span class="c sr">172.16.134.191</span><span class="c ds">209.196.44.172</span><span class="c pr">TCP</span><span class="c ln">60</span><span class="c in">1152 → 6667 [ACK] Seq=135 Ack=9253 Win=17520 Len=0</span></div>
</div>
<!-- related packet markers -->
<svg style="left:40px;top:440px" width="20" height="48" viewBox="0 0 20 48">
<circle cx="7.6" cy="8.6" r="2.4" fill="#12272e"/>
<path d="M7.6,8.6 H16.2" stroke="#12272e" stroke-width="1"/>
<path d="M7.5,10 V17" stroke="#12272e" stroke-width="1"/>
<path d="M7.5,17 V34" stroke="#b8686c" stroke-width="1"/>
<path d="M7.5,34 V42.5 H16.2" stroke="#8f8886" stroke-width="1" fill="none"/>
</svg>
<!-- minimap -->
<div style="left:1260px;top:197px;width:1px;height:556px;background:#55575c"></div>
<div id="mm" style="left:1261px;top:197px;width:7px;height:556px;background:#e7e6ff;overflow:hidden">
<div style="left:0;top:0;width:7px;height:5px;background:#12272e"></div>
<div style="left:0;top:2px;width:7px;height:1px;background:#a0a0a0"></div>
<div style="left:0;top:12px;width:7px;height:1px;background:#a0a0a0"></div>
<div style="left:0;top:18px;width:7px;height:1px;background:#b9b9c6"></div>
<div style="left:0;top:19px;width:7px;height:2px;background:#2878fc"></div>
<div style="left:0;top:21px;width:7px;height:5px;background:#12272e"></div>
<div style="left:0;top:23px;width:7px;height:1px;background:#a0a0a0"></div>
<div style="left:0;top:33px;width:7px;height:1px;background:#12272e"></div>
</div>
<div style="left:1260px;top:581px;width:8px;height:1px;background:#181a20"></div>
<!-- hscroll -->
<div style="left:39px;top:753px;width:1267px;height:8px;background:#22242d;border-top:1px solid #2b2e37"></div>
<div class="sb" style="left:39px;top:754px;width:1167px;height:6px"></div>
<div style="left:1260px;top:753px;width:1px;height:9px;background:#2c2f38"></div>

<div style="left:665px;top:763px;width:17px;height:2px;background:repeating-linear-gradient(90deg,#7c7e87 0,#7c7e87 2px,transparent 2px,transparent 3px)"></div>
<div id="det" style="left:38px;top:766px;width:1234px;height:41px;background:#22242d;overflow:hidden;box-sizing:border-box;border:1px solid #2b2e37">
<div style="left:0;top:0;width:19px;height:41px;background:#272a36"></div>
<svg style="left:6px;top:3px" width="6" height="10" viewBox="0 0 6 10"><path d="M0.8,0.8 L5,5 L0.8,9.2 Z" fill="#aeb0b8"/></svg>
<svg style="left:6px;top:20px" width="6" height="10" viewBox="0 0 6 10"><path d="M0.8,0.8 L5,5 L0.8,9.2 Z" fill="#aeb0b8"/></svg>
<svg style="left:6px;top:37px" width="6" height="10" viewBox="0 0 6 10"><path d="M0.8,0.8 L5,5 L0.8,9.2 Z" fill="#aeb0b8"/></svg>
<span class="mono" style="left:22px;top:0;color:#ececec">Frame 35778: 62 bytes on wire (496 bits), 62 bytes captured (496 bits)</span>
<span class="mono" style="left:22px;top:17px;color:#ececec">Ethernet II, Src: VMware_00:01:e2 (00:05:69:00:01:e2), Dst: EntradaNetwo_05:ce:0a (00:e0:b6:05:ce:0a)</span>
<span class="mono" style="left:22px;top:34px;color:#ececec">Internet Protocol Version 4, Src: 172.16.134.191, Dst: 209.126.161.29</span>
<div class="sb" style="left:1225px;top:1px;width:6px;height:20px"></div>
</div>
<div style="left:1274px;top:780px;width:2px;height:17px;background:repeating-linear-gradient(180deg,#7c7e87 0,#7c7e87 2px,transparent 2px,transparent 3px)"></div>
<div id="bytes" style="left:1277px;top:766px;width:30px;height:41px;background:#22242d;overflow:hidden;box-sizing:border-box;border:1px solid #2b2e37">
<div style="left:0;top:0;width:21px;height:32px;overflow:hidden">
<span class="mono" style="left:9px;top:0;color:#878991">0000</span>
<span class="mono" style="left:9px;top:17px;color:#878991">0010</span>
</div>
<div class="sb" style="left:21px;top:1px;width:6px;height:21px"></div>
<div class="sb" style="left:0px;top:33px;width:19px;height:6px"></div>
<div style="left:20px;top:32px;width:8px;height:8px;background:#24262f;border-left:1px solid #2b2e37;border-top:1px solid #2b2e37"></div>
</div>
<div id="status">
<svg style="left:46px;top:810px" width="16" height="16" viewBox="0 0 16 16"><defs><radialGradient id="rg" cx="0.4" cy="0.3" r="0.75"><stop offset="0" stop-color="#ee8f90"/><stop offset="1" stop-color="#e5565a"/></radialGradient></defs><circle cx="8" cy="8.2" r="6.6" fill="url(#rg)"/></svg>
<svg style="left:69px;top:809px" width="17" height="18" viewBox="0 0 17 18">
<rect x="1.9" y="2.3" width="10.2" height="13.9" fill="#f2f2ea" stroke="#c4c4b8" stroke-width="0.5"/>
<rect x="1.9" y="2.3" width="10.2" height="3.2" fill="#2a9de0"/>
<path d="M4,5.6 Q5,3.4 6.2,5.6 Z" fill="#f2f2ea"/>
<path d="M3.4,8 H8 M3.4,10.6 H7 M3.4,13.6 H10.4" stroke="#b8b8ae" stroke-width="0.9"/>
<path d="M5.2,11.4 L6.3,8.9 L13.6,2.2 L15.2,3.9 L7.8,10.7 Z" fill="#4c4c4c"/>
<path d="M5.2,11.4 L6.3,8.9 L7.8,10.7 Z" fill="#111"/>
</svg>
<span class="t" id="s1" style="left:101.4px">botnet_pcap_file.dat</span>
<div style="left:836px;top:812px;width:1px;height:17px;border-left:1px dotted #8a8c94"></div>
<span class="t" id="s2" style="left:849.1px">Packets: 54536 · Displayed: 8934 (16.4%)</span>
<div style="left:1187px;top:812px;width:1px;height:17px;border-left:1px dotted #8a8c94"></div>
<span class="t" id="s3" style="left:1200.6px">Profile: Default</span>
</div>
<svg style="left:32px;top:830px" width="5" height="5" viewBox="0 0 5 5"><path d="M0,0 Q0,4.4 4.4,4.4 L4.4,5 L0,5 Z" fill="#6a9fe8" opacity="0.85"/></svg>
<svg style="left:1306px;top:829px" width="6" height="6" viewBox="0 0 6 6"><path d="M6,0.5 Q6,6 0.5,6 L6,6 Z" fill="#1d4fa8"/></svg>
<svg style="left:32px;top:73px" width="6" height="6" viewBox="0 0 6 6"><path d="M0,0 H5.5 Q0,0 0,5.5 Z" fill="#2a6ad0"/></svg>
<svg style="left:1306px;top:73px" width="6" height="6" viewBox="0 0 6 6"><path d="M6,0 H0.5 Q6,0 6,5.5 Z" fill="#184a94"/></svg>

</div></div>
</body>
</html>
